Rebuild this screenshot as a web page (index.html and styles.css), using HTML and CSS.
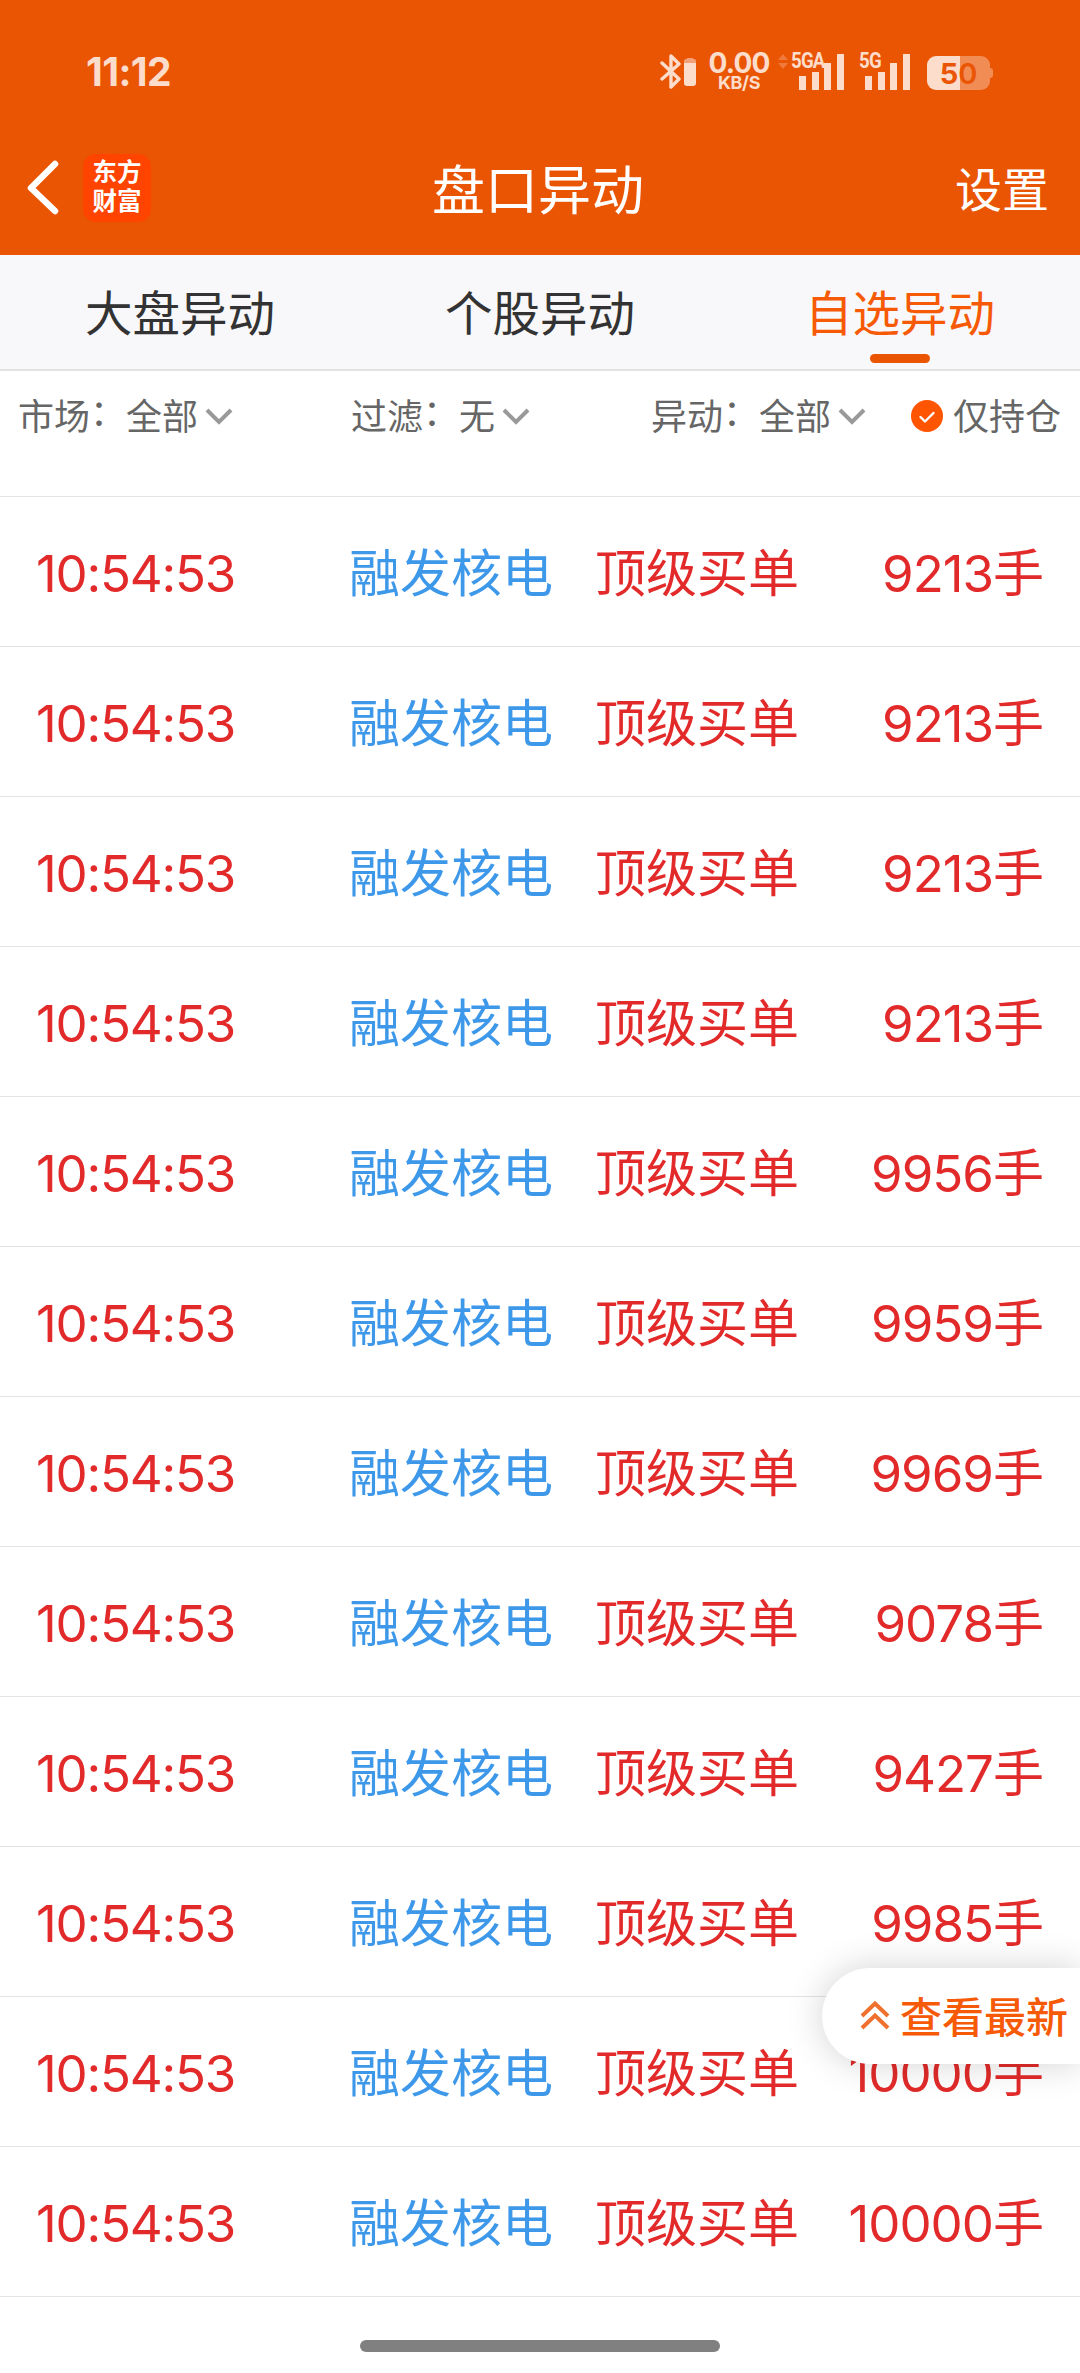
FILE: index.html
```html
<!DOCTYPE html>
<html lang="zh-CN">
<head>
    <meta charset="UTF-8">
    <meta name="viewport" content="width=device-width, initial-scale=1.0">
    <title>盘口异动</title>
    <link rel="stylesheet" href="styles.css">
</head>
<body>
    <header class="header">
        <div class="status-bar">
            <span class="clock">11:12</span>
            <div class="status-icons">
                <svg class="bluetooth" width="37" height="38" viewBox="0 0 37 38">
                    <path d="M2 11 L19 27 L11 35 V4 L19 12 L2 27" fill="none" stroke="#fcdccb" stroke-width="3.4" stroke-linejoin="round" stroke-linecap="round"/>
                    <path d="M24 9 a2 2 0 0 1 2-2 h1 v-1 h6 v1 h1 a2 2 0 0 1 2 2 v2 h-12z" fill="#f3a179"/>
                    <path d="M24 11 h12 v20 a3 3 0 0 1-3 3 h-6 a3 3 0 0 1-3-3z" fill="#fcdccb"/>
                </svg>
                <div class="net-speed">
                    <span class="speed-value">0.00</span>
                    <span class="speed-unit">KB/S</span>
                </div>
                <div class="signal signal-5ga">
                    <svg width="67" height="38" viewBox="0 0 67 38">
                        <path d="M0 8 L5 2 L10 8z M0 11 L10 11 L5 17z" fill="#f07a3b"/>
                        <path d="M21 24h7v14h-7z M34 20h7v18h-7z M46 11h7v27h-7z M59 2h7v36h-7z" fill="#fcdccb"/>
                    </svg>
                    <span class="signal-label">5GA</span>
                </div>
                <div class="signal signal-5g">
                    <svg width="52" height="38" viewBox="0 0 52 38">
                        <path d="M6 24h7v14h-7z M19 20h7v18h-7z M31 11h7v27h-7z M44 2h7v36h-7z" fill="#fcdccb"/>
                    </svg>
                    <span class="signal-label">5G</span>
                </div>
                <div class="battery"><span>5</span><span class="battery-dim">0</span></div>
            </div>
        </div>
        <nav class="nav-bar">
            <div class="nav-left">
                <svg class="back" width="34" height="56" viewBox="0 0 34 56">
                    <path d="M28 4 L4 28 L28 51" fill="none" stroke="#fff" stroke-width="6.5" stroke-linecap="round" stroke-linejoin="round"/>
                </svg>
                <div class="logo"><span>东方</span><span>财富</span></div>
            </div>
            <h1 class="title">盘口异动</h1>
            <a class="settings">设置</a>
        </nav>
    </header>

    <div class="tabs">
        <div class="tab">大盘异动</div>
        <div class="tab">个股异动</div>
        <div class="tab active">自选异动</div>
    </div>

    <div class="filters">
        <div class="filter filter-market">市场<span class="colon">：</span>全部<svg class="arrow" width="28" height="18" viewBox="0 0 28 18"><path d="M2 3 L14 15 L26 3"/></svg></div>
        <div class="filter filter-screen">过滤<span class="colon">：</span>无<svg class="arrow" width="28" height="18" viewBox="0 0 28 18"><path d="M2 3 L14 15 L26 3"/></svg></div>
        <div class="filter filter-change">异动<span class="colon">：</span>全部<svg class="arrow" width="28" height="18" viewBox="0 0 28 18"><path d="M2 3 L14 15 L26 3"/></svg></div>
        <div class="filter filter-hold">
            <svg class="check" width="32" height="32" viewBox="0 0 32 32">
                <circle cx="16" cy="16" r="16" fill="#ff5500"/>
                <path d="M9.5 17 L14 21.5 L22.5 13" fill="none" stroke="#fff" stroke-width="2.4" stroke-linecap="round" stroke-linejoin="round"/>
            </svg>
            仅持仓
        </div>
    </div>

    <ul class="list" id="list"></ul>

    <div class="latest">
        <svg width="30" height="32" viewBox="0 0 30 32">
            <path d="M2 16 L15 3.5 L28 16 M2 28 L15 15.5 L28 28" fill="none" stroke="#f0702e" stroke-width="4"/>
        </svg>
        <span class="latest-text">查看最新</span>
    </div>

    <div class="home-bar"></div>

    <script>
        const volumes = [9213, 9213, 9213, 9213, 9956, 9959, 9969, 9078, 9427, 9985, 10000, 10000];

        document.getElementById('list').innerHTML = volumes.map(volume => `
            <li class="row">
                <span class="time">10:54:53</span>
                <span class="name">融发核电</span>
                <span class="type">顶级买单</span>
                <span class="volume">${volume}<span class="unit">手</span></span>
            </li>`).join('');
    </script>
</body>
</html>
```
FILE: styles.css
```css
* {
    box-sizing: border-box;
}

body {
    margin: 0;
    width: 1080px;
    height: 2373px;
    overflow: hidden;
    position: relative;
    background-color: #fff;
    font-family: Inter, "Noto Sans CJK SC", sans-serif;
}

.header {
    height: 255px;
    background-color: #ea5504;
    color: #fff;
}

.status-bar {
    display: flex;
    justify-content: space-between;
    height: 128px;
    padding: 52px 87px 0 86px;
    color: #fcdccb;
}

.clock {
    height: 40px;
    line-height: 40px;
    font-size: 39px;
    font-weight: 700;
    letter-spacing: -0.6px;
}

.status-icons {
    display: flex;
    height: 38px;
}

.net-speed {
    display: flex;
    flex-direction: column;
    align-items: center;
    width: 60px;
    margin-left: 12px;
}

.speed-value {
    line-height: 22px;
    font-size: 28px;
    font-weight: 700;
    letter-spacing: -0.8px;
}

.speed-unit {
    line-height: 18px;
    font-size: 18px;
    font-weight: 700;
    letter-spacing: -0.4px;
}

.signal {
    position: relative;
    margin-left: 9px;
}

.signal-5g {
    margin-left: 14px;
}

.signal-label {
    position: absolute;
    top: 0;
    left: 13px;
    line-height: 18px;
    font-family: Roboto, sans-serif;
    font-size: 22px;
    font-weight: 700;
    letter-spacing: -1px;
    transform: scaleX(0.85);
    transform-origin: left;
}

.signal-5g .signal-label {
    left: 0;
}

.battery {
    position: relative;
    width: 63px;
    height: 34px;
    margin: 4px 3px 0 16px;
    border-radius: 9px;
    background: linear-gradient(90deg, #fcdccb 33px, #f28c55 33px);
    color: #ea5504;
    font-size: 29px;
    font-weight: 700;
    line-height: 35px;
    text-align: center;
}

.battery-dim {
    font-weight: 600;
}

.battery::after {
    content: "";
    position: absolute;
    top: 12px;
    right: -3px;
    width: 3px;
    height: 10px;
    border-radius: 0 3px 3px 0;
    background-color: #f28c55;
}

.nav-bar {
    display: grid;
    grid-template-columns: 1fr auto 1fr;
    align-items: center;
    height: 120px;
    padding: 0 31px 0 27px;
}

.nav-left {
    display: flex;
    align-items: center;
    gap: 22px;
}

.logo {
    display: flex;
    flex-direction: column;
    align-items: center;
    justify-content: center;
    width: 68px;
    height: 68px;
    padding-bottom: 2px;
    border-radius: 13px;
    background-color: #ff4400;
    font-size: 24.5px;
    font-weight: 700;
    line-height: 29px;
}

.title {
    margin: 6px 0 0;
    font-size: 53px;
    font-weight: 400;
    line-height: 60px;
}

.settings {
    justify-self: end;
    margin-top: 4px;
    font-size: 47px;
    line-height: 60px;
}

.tabs {
    display: grid;
    grid-template-columns: repeat(3, 1fr);
    height: 116px;
    border-bottom: 2px solid #e2e2e2;
    background-color: #f8f8fa;
}

.tab {
    position: relative;
    padding-top: 3px;
    font-size: 47.5px;
    line-height: 111px;
    text-align: center;
    color: #333;
}

.active {
    color: #f75a07;
}

.active::after {
    content: "";
    position: absolute;
    bottom: 6px;
    left: 150px;
    width: 60px;
    height: 9px;
    border-radius: 5px;
    background-color: #ea5504;
}

.filters {
    display: flex;
    height: 125px;
    padding: 26px 0 0 18px;
}

.filter {
    display: flex;
    align-items: center;
    height: 40px;
    font-size: 36px;
    line-height: 40px;
    color: #666;
}

.filter-market {
    width: 333px;
}

.filter-screen {
    width: 300px;
}

.filter-change {
    width: 260px;
}

.colon {
    margin-bottom: 8px;
}

.arrow {
    margin: -3px 0 0 7px;
    fill: none;
    stroke: #999;
    stroke-width: 4;
}

.check {
    margin: -3px 10px 0 0;
}

.list {
    margin: 0;
    padding: 0;
    list-style: none;
    border-top: 1px solid #e3e3e3;
}

.row {
    display: grid;
    grid-template-columns: 313px 246px 1fr auto;
    align-items: baseline;
    height: 150px;
    padding: 47px 36px 0 36px;
    border-bottom: 1px solid #e3e3e3;
    font-size: 51px;
    line-height: 60px;
    color: #e22a2a;
}

.time {
    letter-spacing: -1.2px;
}

.name {
    color: #3e98ea;
}

.volume {
    letter-spacing: -1px;
}

.unit {
    letter-spacing: 0;
}

.latest {
    position: absolute;
    top: 1968px;
    right: 0;
    display: flex;
    align-items: center;
    gap: 10px;
    width: 258px;
    height: 96px;
    padding-left: 38px;
    border-radius: 48px 0 0 48px;
    background-color: #fff;
    box-shadow: 0 0 36px rgba(0, 0, 0, 0.18);
    color: #f75a07;
    font-size: 42px;
    font-weight: 500;
}

.latest-text {
    padding-top: 3px;
    line-height: 93px;
}

.home-bar {
    width: 360px;
    height: 12px;
    margin: 43px auto 0;
    border-radius: 6px;
    background-color: #808080;
}
```
